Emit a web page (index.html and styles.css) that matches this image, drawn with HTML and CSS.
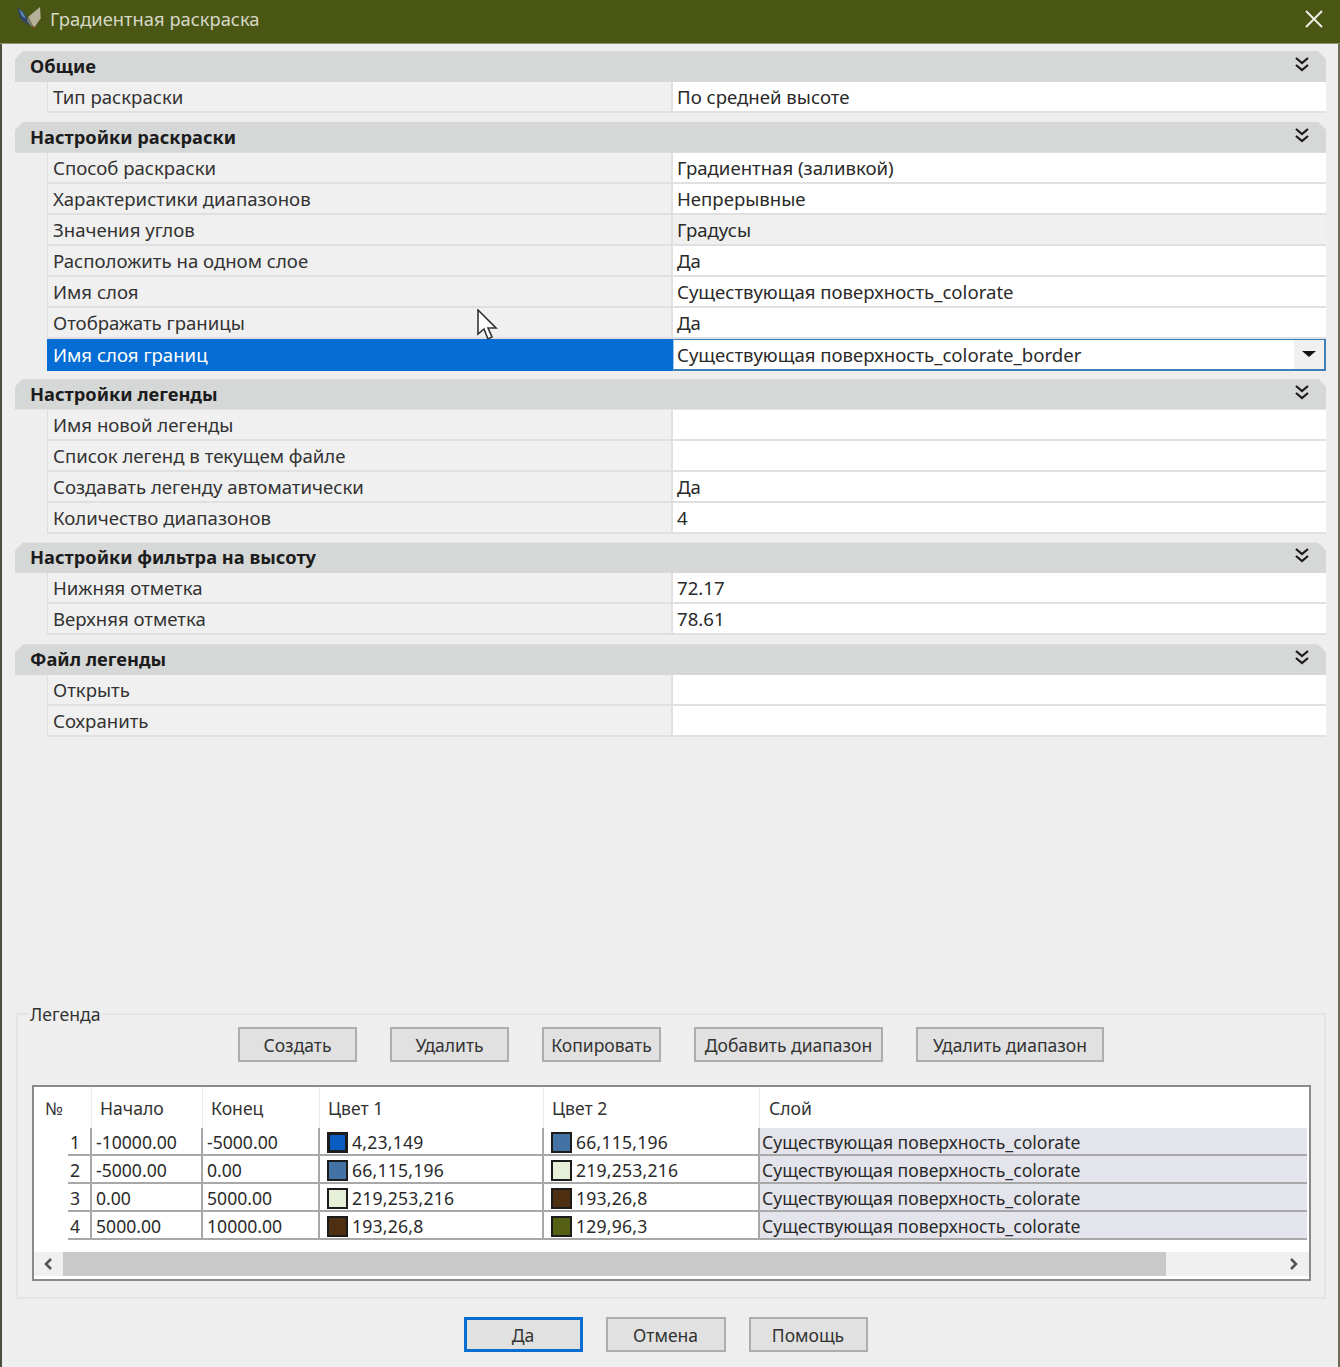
FILE: index.html
```html
<!DOCTYPE html>
<html lang="ru">
<head>
    <meta charset="UTF-8">
    <title>Градиентная раскраска</title>
    <link rel="stylesheet" href="styles.css">
</head>
<body>
    <div class="title-bar">
        <svg class="app-icon" width="24" height="24" viewBox="0 0 24 24">
            <polygon points="0.3,0.3 6.3,4.7 13,16 15.7,19.7 6.3,14.7 2.3,9.7" fill="#2f4560"/>
            <polygon points="2,2 6,6 9,12 5,9" fill="#5c90b8"/>
            <polygon points="11.3,9.7 23,0 23.7,11.3 17,21.3" fill="#b5b09a"/>
            <polygon points="11.3,9.7 17,21.3 14,19 10,14" fill="#7f7c6c"/>
            <polygon points="14.5,19 18,19.5 16,22" fill="#7a4a20"/>
        </svg>
        <span class="title-text">Градиентная раскраска</span>
        <svg class="close-icon" width="18" height="18" viewBox="0 0 18 18">
            <path d="M1 1 L17 17 M17 1 L1 17" stroke="#eeeee6" stroke-width="2" fill="none"/>
        </svg>
    </div>

    <div class="window">
        <div class="props">
            <div class="group">
                <div class="group-header">Общие
                    <svg class="chevrons" width="14" height="15" viewBox="0 0 14 15"><path d="M1 1 L7 6 L13 1 M1 8 L7 13 L13 8" stroke="#1a1a1a" stroke-width="2.2" fill="none"/></svg>
                </div>
                <div class="prop-row"><div class="prop-name">Тип раскраски</div><div class="prop-value">По средней высоте</div></div>
            </div>

            <div class="group">
                <div class="group-header">Настройки раскраски
                    <svg class="chevrons" width="14" height="15" viewBox="0 0 14 15"><path d="M1 1 L7 6 L13 1 M1 8 L7 13 L13 8" stroke="#1a1a1a" stroke-width="2.2" fill="none"/></svg>
                </div>
                <div class="prop-row"><div class="prop-name">Способ раскраски</div><div class="prop-value">Градиентная (заливкой)</div></div>
                <div class="prop-row"><div class="prop-name">Характеристики диапазонов</div><div class="prop-value">Непрерывные</div></div>
                <div class="prop-row"><div class="prop-name">Значения углов</div><div class="prop-value readonly">Градусы</div></div>
                <div class="prop-row"><div class="prop-name">Расположить на одном слое</div><div class="prop-value">Да</div></div>
                <div class="prop-row"><div class="prop-name">Имя слоя</div><div class="prop-value">Существующая поверхность_colorate</div></div>
                <div class="prop-row"><div class="prop-name">Отображать границы</div><div class="prop-value">Да</div></div>
                <div class="prop-row selected">
                    <div class="prop-name">Имя слоя границ</div>
                    <div class="prop-value">Существующая поверхность_colorate_border
                        <span class="drop-btn"><span class="drop-arrow"></span></span>
                    </div>
                </div>
            </div>

            <div class="group">
                <div class="group-header">Настройки легенды
                    <svg class="chevrons" width="14" height="15" viewBox="0 0 14 15"><path d="M1 1 L7 6 L13 1 M1 8 L7 13 L13 8" stroke="#1a1a1a" stroke-width="2.2" fill="none"/></svg>
                </div>
                <div class="prop-row"><div class="prop-name">Имя новой легенды</div><div class="prop-value"></div></div>
                <div class="prop-row"><div class="prop-name">Список легенд в текущем файле</div><div class="prop-value"></div></div>
                <div class="prop-row"><div class="prop-name">Создавать легенду автоматически</div><div class="prop-value">Да</div></div>
                <div class="prop-row"><div class="prop-name">Количество диапазонов</div><div class="prop-value">4</div></div>
            </div>

            <div class="group">
                <div class="group-header">Настройки фильтра на высоту
                    <svg class="chevrons" width="14" height="15" viewBox="0 0 14 15"><path d="M1 1 L7 6 L13 1 M1 8 L7 13 L13 8" stroke="#1a1a1a" stroke-width="2.2" fill="none"/></svg>
                </div>
                <div class="prop-row"><div class="prop-name">Нижняя отметка</div><div class="prop-value">72.17</div></div>
                <div class="prop-row"><div class="prop-name">Верхняя отметка</div><div class="prop-value">78.61</div></div>
            </div>

            <div class="group">
                <div class="group-header">Файл легенды
                    <svg class="chevrons" width="14" height="15" viewBox="0 0 14 15"><path d="M1 1 L7 6 L13 1 M1 8 L7 13 L13 8" stroke="#1a1a1a" stroke-width="2.2" fill="none"/></svg>
                </div>
                <div class="prop-row"><div class="prop-name">Открыть</div><div class="prop-value"></div></div>
                <div class="prop-row"><div class="prop-name">Сохранить</div><div class="prop-value"></div></div>
            </div>
        </div>

        <fieldset class="legend-box">
            <legend class="legend-title">Легенда</legend>
            <div class="legend-actions">
                <button class="btn w-119">Создать</button>
                <button class="btn w-119">Удалить</button>
                <button class="btn w-119">Копировать</button>
                <button class="btn w-189">Добавить диапазон</button>
                <button class="btn w-188">Удалить диапазон</button>
            </div>

            <div class="table-frame">
                <table class="legend-table">
                    <colgroup>
                        <col class="col-pad"><col class="col-num"><col class="col-start"><col class="col-end"><col class="col-c1"><col class="col-c2"><col>
                    </colgroup>
                    <thead>
                        <tr>
                            <th colspan="2" class="th-num">№</th>
                            <th>Начало</th>
                            <th>Конец</th>
                            <th>Цвет 1</th>
                            <th>Цвет 2</th>
                            <th>Слой</th>
                        </tr>
                    </thead>
                    <tbody>
                        <tr>
                            <td class="pad"></td><td class="num">1</td><td>-10000.00</td><td>-5000.00</td>
                            <td class="color"><span class="swatch c-blue"></span>4,23,149</td>
                            <td class="color"><span class="swatch c-steel"></span>66,115,196</td>
                            <td class="layer">Существующая поверхность_colorate</td>
                        </tr>
                        <tr>
                            <td class="pad"></td><td class="num">2</td><td>-5000.00</td><td>0.00</td>
                            <td class="color"><span class="swatch c-steel"></span>66,115,196</td>
                            <td class="color"><span class="swatch c-pale"></span>219,253,216</td>
                            <td class="layer">Существующая поверхность_colorate</td>
                        </tr>
                        <tr>
                            <td class="pad"></td><td class="num">3</td><td>0.00</td><td>5000.00</td>
                            <td class="color"><span class="swatch c-pale"></span>219,253,216</td>
                            <td class="color"><span class="swatch c-brown"></span>193,26,8</td>
                            <td class="layer">Существующая поверхность_colorate</td>
                        </tr>
                        <tr>
                            <td class="pad"></td><td class="num">4</td><td>5000.00</td><td>10000.00</td>
                            <td class="color"><span class="swatch c-brown"></span>193,26,8</td>
                            <td class="color"><span class="swatch c-olive"></span>129,96,3</td>
                            <td class="layer">Существующая поверхность_colorate</td>
                        </tr>
                    </tbody>
                </table>
                <div class="scrollbar">
                    <svg class="scroll-arrow" width="10" height="14" viewBox="0 0 10 14"><path d="M8 2 L3 7 L8 12" stroke="#555" stroke-width="2.6" fill="none"/></svg>
                    <div class="scroll-track"><div class="scroll-thumb"></div></div>
                    <svg class="scroll-arrow" width="10" height="14" viewBox="0 0 10 14"><path d="M2 2 L7 7 L2 12" stroke="#555" stroke-width="2.6" fill="none"/></svg>
                </div>
            </div>
        </fieldset>

        <div class="footer">
            <button class="btn w-119 primary">Да</button>
            <button class="btn w-120">Отмена</button>
            <button class="btn w-119">Помощь</button>
        </div>
    </div>

    <!-- mouse pointer caught in the screenshot -->
    <svg class="pointer" width="22" height="33" viewBox="0 0 22 33">
        <path d="M1 1 L1 25 L7 20 L11 30 L15 28 L11 19 L19 19 Z" fill="#fff" stroke="#333" stroke-width="1.6"/>
    </svg>
</body>
</html>
```

FILE: styles.css
```css
* {
    box-sizing: border-box;
}

body {
    margin: 0;
    width: 1340px;
    height: 1367px;
    font-family: 'Noto Sans', 'Open Sans', sans-serif;
    font-size: 18.6px;
    color: #2a2a2a;
    background-color: #eeeeee;
    display: flex;
    flex-direction: column;
    overflow: hidden;
    position: relative;
}

.title-bar {
    height: 44px;
    flex-shrink: 0;
    background-color: #4a5614;
    color: #d6d8c6;
    display: flex;
    align-items: center;
    padding: 0 17px;
    border-bottom: 1px solid #8f9472;
}

.app-icon {
    margin-right: 9px;
    margin-top: -6px;
}

.title-text {
    flex-grow: 1;
    margin-top: -7px;
    font-size: 18.35px;
}

.close-icon {
    margin-top: -6px;
}

.window {
    flex-grow: 1;
    display: flex;
    flex-direction: column;
    border-left: 2px solid #4f4c3c;
    border-right: 2px solid #6d6c58;
}

.props {
    padding: 7px 12px 0 13px;
    display: flex;
    flex-direction: column;
    gap: 8.8px;
}

.group-header {
    height: 31px;
    background-color: #d6d7d7;
    clip-path: polygon(8px 0, calc(100% - 8px) 0, 100% 8px, 100% 100%, 0 100%, 0 8px);
    font-weight: bold;
    font-size: 18.25px;
    color: #1c1c1c;
    padding-left: 15px;
    line-height: 30px;
    position: relative;
}

.chevrons {
    position: absolute;
    right: 17px;
    top: 6px;
}

.prop-row {
    height: 31px;
    display: flex;
    margin-left: 32px;
    border-bottom: 2px solid #e0e0e0;
    line-height: 30px;
}

.prop-name {
    width: 626px;
    flex-shrink: 0;
    padding-left: 5px;
    background-color: #f0f0f0;
    border-left: 1px solid #dedede;
    border-right: 2px solid #e0e0e0;
    color: #333;
}

.prop-value {
    flex-grow: 1;
    padding-left: 4px;
    background-color: #fff;
    color: #2a2a2a;
    position: relative;
}

.prop-value.readonly {
    background-color: #f0f0f0;
}

.prop-row.selected {
    height: 32px;
    margin-bottom: -1px;
    border-bottom: none;
}

.selected .prop-name {
    background-color: #066dd4;
    color: #fff;
    border-left: none;
    border-right: none;
    padding-left: 6px;
    line-height: 31px;
}

.selected .prop-value {
    border: 2px solid #3d7fb8;
    border-left: 1px solid #9cc4e4;
    border-top-width: 1px;
    padding-left: 3px;
    line-height: 29px;
}

.drop-btn {
    position: absolute;
    right: 0;
    top: 0;
    bottom: 0;
    width: 30px;
    background-color: #f0f0f0;
    display: flex;
    align-items: center;
    justify-content: center;
}

.drop-arrow {
    width: 0;
    height: 0;
    border-left: 7px solid transparent;
    border-right: 7px solid transparent;
    border-top: 6px solid #111;
}

.legend-box {
    margin: auto 12px 0 14px;
    padding: 0 0 16px 14px;
    border: 2px solid #e4e4e4;
    min-width: 0;
    font-size: 17.6px;
}

.legend-title {
    padding: 0 2px;
    margin-left: -4px;
    color: #333;
    line-height: 20px;
}

.legend-actions {
    display: flex;
    gap: 33px;
    padding-left: 206px;
    margin-top: 3px;
    margin-bottom: 23px;
}

.btn {
    height: 35px;
    font-family: inherit;
    font-size: 17.5px;
    color: #333;
    background-color: #e1e1e1;
    border: 2px solid #adadad;
    padding: 0;
}

.w-119 { width: 119px; }
.w-120 { width: 120px; }
.w-189 { width: 189px; }
.w-188 { width: 188px; }

.btn.primary {
    border: 3px solid #0a6ed1;
}

.table-frame {
    width: 1279px;
    height: 196px;
    border: 2px solid #8a8a8a;
    background-color: #fff;
    display: flex;
    flex-direction: column;
}

.legend-table {
    width: 1273px;
    table-layout: fixed;
    border-collapse: separate;
    border-spacing: 0;
}

.col-pad { width: 34px; }
.col-num { width: 24px; }
.col-start { width: 111px; }
.col-end { width: 117px; }
.col-c1 { width: 224px; }
.col-c2 { width: 216px; }

.legend-table th {
    height: 41px;
    font-weight: normal;
    text-align: left;
    padding: 0 0 0 8px;
    color: #333;
    border-right: 1px solid #ececec;
}

.legend-table th:last-child {
    border-right: none;
    padding-left: 9px;
}

.legend-table .th-num {
    padding-left: 11px;
}

.legend-table td {
    height: 28px;
    padding: 1px 0 0 4px;
    border-bottom: 2px solid #a8a8a8;
    border-right: 2px solid #a8a8a8;
    white-space: nowrap;
    overflow: hidden;
    color: #2a2a2a;
}

.legend-table td.pad {
    border: none;
}

.legend-table td.num {
    text-align: right;
    padding: 1px 10px 0 0;
}

.legend-table td.color {
    padding-left: 7px;
    letter-spacing: 0.2px;
}

.legend-table td.layer {
    padding-left: 2px;
    border-right: none;
    background-color: #e4e5ec;
}

.swatch {
    display: inline-block;
    width: 21px;
    height: 21px;
    border: 2px solid #1c1c1c;
    margin-right: 4px;
    vertical-align: -4px;
}

.c-blue { background-color: #0a5cc0; border-width: 3px; }
.c-steel { background-color: #4273a4; }
.c-pale { background-color: #e6f0d8; }
.c-brown { background-color: #4f2f12; }
.c-olive { background-color: #566014; }

.scrollbar {
    margin-top: 12px;
    height: 24px;
    display: flex;
    align-items: center;
    background-color: #f0f0f0;
}

.scroll-arrow {
    margin: 0 10px 0 9px;
    flex-shrink: 0;
}

.scroll-track {
    flex-grow: 1;
    height: 100%;
}

.scroll-thumb {
    width: 1103px;
    height: 100%;
    background-color: #c9c9c9;
}

.footer {
    display: flex;
    justify-content: center;
    gap: 23px;
    padding: 18px 0 15px;
    margin-left: -9px;
}

.pointer {
    position: absolute;
    left: 477px;
    top: 309px;
}
```
